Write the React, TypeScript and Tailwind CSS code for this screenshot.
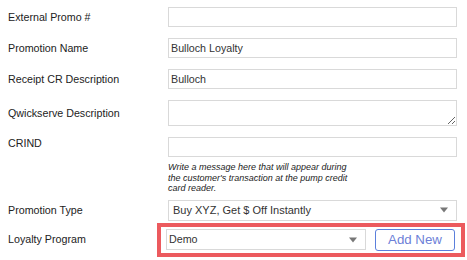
import { ReactNode } from 'react'

function Row({ label, children, top = false, className = '' }: { label: string; children: ReactNode; top?: boolean; className?: string }) {
  return (
    <div className={`flex ${top ? 'items-start' : 'items-center'} ${className}`}>
      <div className={`w-[168px] pl-[8px] text-[10.7px] text-[#222] ${top ? 'leading-[12px]' : ''}`}>{label}</div>
      <div className="w-[289px]">{children}</div>
    </div>
  )
}

function TextBox({ value = '' }: { value?: string }) {
  return (
    <input
      readOnly
      value={value}
      className="block w-full h-[20px] border border-[#d9d9d9] bg-white px-[2px] text-[10.7px] text-[#333] outline-none"
    />
  )
}

function Select({ value, className = '' }: { value: string; className?: string }) {
  return (
    <div className={`relative flex items-center h-[21px] border border-[#d9d9d9] bg-white text-[#333] ${className}`}>
      <span className="flex-1">{value}</span>
      <span className="absolute right-[8px] top-1/2 -translate-y-1/2 w-0 h-0 border-l-[4px] border-r-[4px] border-t-[5px] border-l-transparent border-r-transparent border-t-[#777]" />
    </div>
  )
}

export default function App() {
  return (
    <div className="w-[467px] h-[260px] bg-white pt-[7px] font-['Liberation_Sans',Arial,sans-serif] overflow-hidden">
      <Row label="External Promo #">
        <TextBox />
      </Row>
      <Row label="Promotion Name" className="mt-[11px]">
        <TextBox value="Bulloch Loyalty" />
      </Row>
      <Row label="Receipt CR Description" className="mt-[11px]">
        <TextBox value="Bulloch" />
      </Row>
      <Row label="Qwickserve Description" className="mt-[11px]">
        <textarea readOnly className="block w-full h-[26px] border border-[#d9d9d9] bg-white outline-none" />
      </Row>
      <Row label="CRIND" top className="mt-[11px]">
        <TextBox />
        <p className="mt-[5px] text-[9px] leading-[10.5px] italic text-[#222]">
          Write a message here that will appear during
          <br />
          the customer&apos;s transaction at the pump credit
          <br />
          card reader.
        </p>
      </Row>
      <Row label="Promotion Type" className="mt-[6px]">
        <Select value="Buy XYZ, Get $ Off Instantly" className="text-[11px] pl-[4px]" />
      </Row>
      <div className="flex items-center mt-[2px]">
        <div className="w-[157px] pl-[8px] text-[10.7px] text-[#222]">Loyalty Program</div>
        <div className="w-[308px] h-[34px] border-[4px] border-[#ec5a5e] flex items-center px-[5px] gap-[9px]">
          <Select value="Demo" className="w-[200px] text-[10.7px] pl-[2px]" />
          <button className="w-[80px] h-[22px] border border-[#5b7fdc] rounded-[3px] bg-white text-[13.3px] leading-none text-[#6d7fd8]">
            Add New
          </button>
        </div>
      </div>
    </div>
  )
}
